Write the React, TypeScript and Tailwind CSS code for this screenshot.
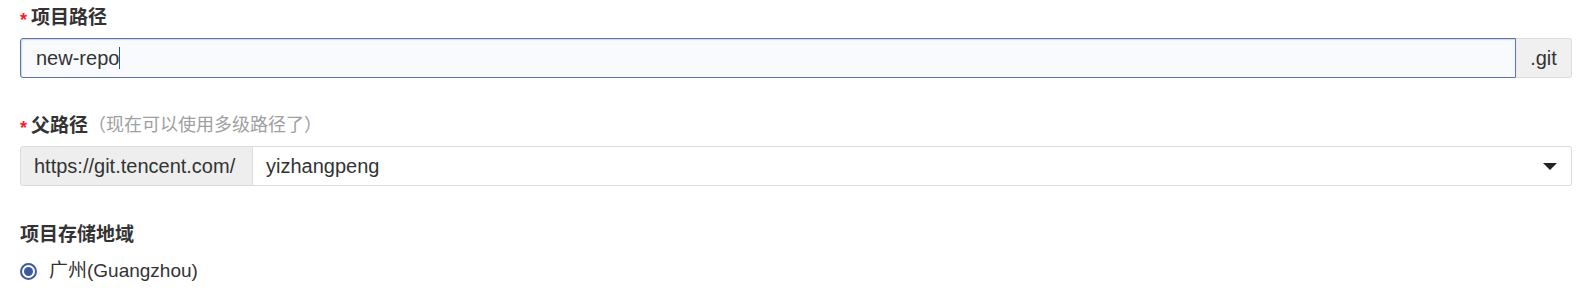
import React from 'react';

const font = { fontFamily: '"Liberation Sans", "Noto Sans CJK SC", sans-serif' };

function Label({ text, required, hint }: { text: string; required?: boolean; hint?: string }) {
  return (
    <div className="flex items-center h-[27px] leading-[27px]">
      {required && (
        <span className="text-[#f5222d] text-[18px] font-bold leading-none self-start mt-[7px] mr-[4px]">*</span>
      )}
      <span className="text-[19px] font-bold text-[#333333]">{text}</span>
      {hint && <span className="text-[18px] text-[#a0a0a0]">{hint}</span>}
    </div>
  );
}

export default function App() {
  return (
    <div className="bg-white w-[1584px] h-[307px] pl-5 pr-3 pt-1" style={font}>
      {/* 项目路径 */}
      <Label text="项目路径" required />
      <div className="flex mt-[7px] h-10">
        <div className="flex-1 flex items-center bg-[#f8fafe] border border-[#5b73ac] rounded-l-[3px] px-[15px] text-[20px] text-[#333333] shadow-[inset_1px_1px_1px_rgba(91,115,172,0.25)]">
          <span>new-repo</span>
          <span className="w-px h-[22px] bg-[#2b4c9a]" />
        </div>
        <div className="w-[56px] flex items-center justify-center bg-[#f0f0f0] border border-l-0 border-[#dcdcdc] rounded-r-[3px] text-[20px] text-[#333333]">
          .git
        </div>
      </div>

      {/* 父路径 */}
      <div className="mt-[34px]">
        <Label text="父路径" required hint="（现在可以使用多级路径了）" />
      </div>
      <div className="flex mt-[7px] h-10">
        <div className="w-[233px] flex items-center bg-[#eeeeee] border border-[#dcdcdc] rounded-l-[3px] px-[13px] text-[20px] text-[#333333]">
          https://git.tencent.com/
        </div>
        <div className="flex-1 flex items-center justify-between bg-white border border-l-0 border-[#dcdcdc] rounded-r-[3px] pl-[13px] pr-[14px] text-[20px] text-[#333333]">
          <span>yizhangpeng</span>
          <svg width="14" height="7" viewBox="0 0 14 7">
            <path d="M0 0 L14 0 L7 7 Z" fill="#222222" />
          </svg>
        </div>
      </div>

      {/* 项目存储地域 */}
      <div className="mt-[35px]">
        <Label text="项目存储地域" />
      </div>
      <div className="flex items-center h-[27px] mt-[10px]">
        <span className="w-[17px] h-[17px] rounded-full border-2 border-[#3d5a9e] flex items-center justify-center">
          <span className="w-[9px] h-[9px] rounded-full bg-[#3d5a9e]" />
        </span>
        <span className="ml-[12px] text-[19px] text-[#333333]">广州(Guangzhou)</span>
      </div>
    </div>
  );
}
